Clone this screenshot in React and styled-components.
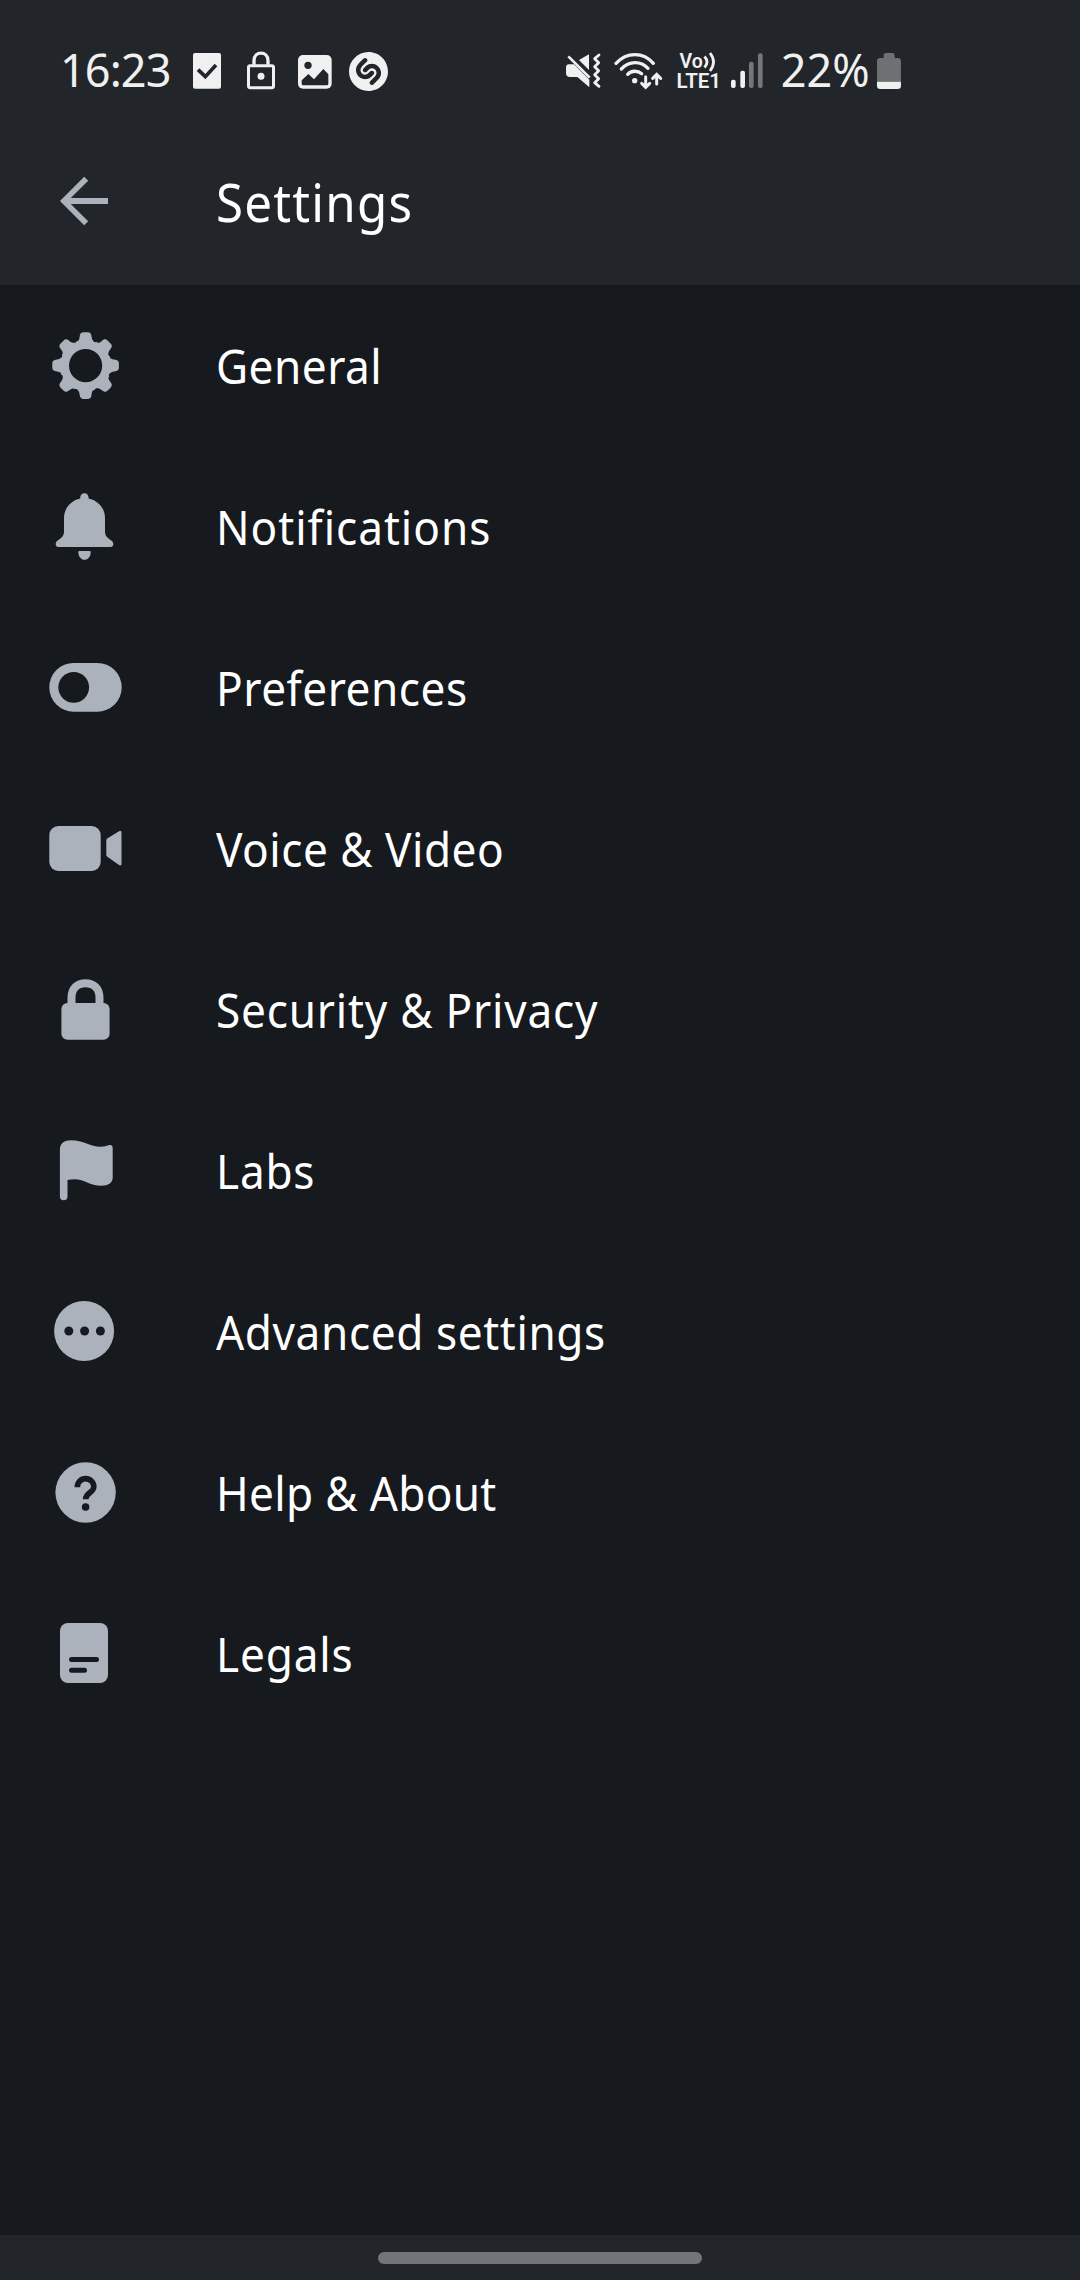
import React from "react";
import styled, { createGlobalStyle } from "styled-components";
import { SiShazam } from "react-icons/si";

const color = {
  page: "#16191e",
  bar: "#22262b",
  icon: "#abb2bc",
  status: "#f0f0f0",
  dim: "#74767a",
};

const GlobalStyle = createGlobalStyle`
  * { box-sizing: border-box; }
  body { margin: 0; background: ${color.page}; }
`;

const Screen = styled.div`
  display: flex;
  flex-direction: column;
  width: 1080px;
  height: 2280px;
  background: ${color.page};
  color: #fff;
  font-family: "Noto Sans", "Open Sans", sans-serif;
`;

const StatusBar = styled.div`
  display: flex;
  flex: none;
  height: 120px;
  padding: 30px 0 0 60px;
  background: ${color.bar};
  color: ${color.status};
`;

const StatusGroup = styled.div`
  display: flex;
  align-items: flex-start;
  width: ${(p) => p.$width || "auto"};
`;

const StatusText = styled.span`
  flex: none;
  width: ${(p) => p.$width}px;
  margin-left: ${(p) => p.$gap || 0}px;
  font-size: 45px;
  font-weight: 400;
  line-height: 80px;
  letter-spacing: ${(p) => p.$spacing || 0}px;
  white-space: nowrap;
`;

const StatusSvg = styled.svg`
  flex: none;
  height: 90px;
  width: ${(p) => p.$width}px;
  margin-left: ${(p) => p.$gap}px;
  overflow: visible;
`;

const Shazam = styled(SiShazam)`
  flex: none;
  width: 39px;
  height: 39px;
  margin: 22px 0 0 17.5px;
`;

const Volte = styled.div`
  flex: none;
  width: 43px;
  margin: 23px 0 0 13.5px;
  font-family: Roboto, sans-serif;
  font-weight: 600;
  white-space: nowrap;
`;

const VolteTop = styled.div`
  display: flex;
  height: 19px;
  padding-left: 3px;
  font-size: 19.5px;
  line-height: 17px;
`;

const VolteBottom = styled.div`
  font-size: 20.5px;
  line-height: 19px;
`;

const Waves = styled.svg`
  flex: none;
  width: 13px;
  height: 20px;
  margin-top: -1px;
`;

const Header = styled.header`
  display: flex;
  flex: none;
  height: 165px;
  padding-left: 40px;
  background: ${color.bar};
`;

const BackArrow = styled.svg`
  flex: none;
  width: 90px;
  height: 165px;
  fill: ${color.icon};
`;

const Title = styled.h1`
  margin: 0 0 0 86px;
  font-size: 53px;
  font-weight: 400;
  line-height: 163px;
  letter-spacing: ${(p) => p.$spacing}px;
  transform: scaleX(0.93);
  transform-origin: left;
`;

const List = styled.ul`
  flex: 1;
  margin: 0;
  padding: 0;
  list-style: none;
  background: linear-gradient(#14171b, ${color.page} 14px);
`;

const Row = styled.li`
  display: flex;
  height: 161px;
  padding-left: 40px;
`;

const RowIcon = styled.svg`
  flex: none;
  width: 90px;
  height: 161px;
  fill: ${color.icon};
`;

const Label = styled.span`
  margin-left: 86px;
  font-size: 47.5px;
  line-height: 162px;
  letter-spacing: ${(p) => p.$spacing}px;
  white-space: nowrap;
  transform: scaleX(0.93);
  transform-origin: left;
`;

const NavBar = styled.div`
  display: flex;
  flex: none;
  justify-content: center;
  height: 45px;
  padding-top: 17px;
  background: ${color.bar};
`;

const Handle = styled.div`
  width: 324px;
  height: 12px;
  border-radius: 6px;
  background: #737478;
`;

function gearPath() {
  const tooth = [
    [-6, -28.6], [-5.7, -32], [-4.6, -33.3], [-2, -33.3],
    [2, -33.3],
    [4.6, -33.3], [5.7, -32], [6, -28.6],
    [6.5, -24.4], [9.5, -22.4], [13, -23.4],
  ];
  let d = "";
  for (let k = 0; k < 8; k++) {
    const turn = (n) => (x, y) => {
      const a = (n * Math.PI) / 4;
      return `${(45.6 + x * Math.cos(a) - y * Math.sin(a)).toFixed(2)} ${(80.6 + x * Math.sin(a) + y * Math.cos(a)).toFixed(2)}`;
    };
    const p = tooth.map(([x, y]) => turn(k)(x, y));
    const next = turn(k + 1);
    d += `${k ? "L" : "M"}${p[0]}C${p[1]} ${p[2]} ${p[3]}L${p[4]}C${p[5]} ${p[6]} ${p[7]}`;
    d += `C${p[8]} ${p[9]} ${next(-9.2, -24.4)}C${next(-7.5, -24.2)} ${next(-6.3, -25.5)} ${next(-6, -28.6)}`;
  }
  return d + "ZM45.6 64a16.6 16.6 0 1 0 0 33.2a16.6 16.6 0 1 0 0-33.2Z";
}

const items = [
  { label: "General", spacing: 0.5, icon: <path fillRule="evenodd" d={gearPath()} /> },
  {
    label: "Notifications",
    spacing: 1.04,
    icon: (
      <>
        <path d="M40.2 52.4C40 49.4 41.8 47.2 44.4 47.2S48.800 49.4 48.600 52.4C58 54.5 65 62 65 72V85.5C65 90.5 68.5 92.6 71.3 94.4C72.8 95.4 73.3 96.8 73.3 98.2C73.3 99.8 72.2 101 70.7 101H18.3C16.8 101 15.7 99.8 15.7 98.2C15.7 96.8 16.2 95.4 17.7 94.4C20.5 92.6 24 90.5 24 85.5V72C24 62 31 54.5 40.2 52.4Z" />
        <path d="M38.3 106Q38.3 105 39.3 105H49.7Q50.7 105 50.7 106C50.7 110.5 48 113.8 44.5 113.8S38.3 110.5 38.3 106Z" />
      </>
    ),
  },
  {
    label: "Preferences",
    spacing: 0.56,
    icon: (
      <>
        <rect x="9.3" y="56" width="72.4" height="48.7" rx="24.3" />
        <circle cx="33.7" cy="80.3" r="15.4" fill={color.page} />
      </>
    ),
  },
  {
    label: "Voice & Video",
    spacing: 0.52,
    icon: (
      <>
        <rect x="9.3" y="58" width="51.4" height="45" rx="9" />
        <path d="M66.3 72.6Q66.3 71 67.6 70.2L79 63.2Q81.5 62 81.5 64.8V95.6Q81.5 98.4 79 97L67.4 88.8Q66.3 88 66.3 86.4Z" />
      </>
    ),
  },
  {
    label: "Security & Privacy",
    spacing: 0.83,
    icon: (
      <>
        <path d="M31.5 78V69C31.5 59 37.5 54.2 45.5 54.2S59.5 59 59.5 69V78" fill="none" stroke={color.icon} strokeWidth="8" />
        <rect x="21.4" y="74" width="48.2" height="36.7" rx="6" />
      </>
    ),
  },
  {
    label: "Labs",
    spacing: 0.8,
    icon: (
      <path d="M19.9 60C19.9 53 24.5 50.3 31 50.3C43 50.3 51 56.7 60 56.7C64.5 56.7 66.5 55.8 69.5 55Q72.7 54.4 72.7 58.5V87.5C72.7 93 68 95.7 61.5 95.7C49.5 95.7 44.5 89.3 34.5 89.3C31.8 89.3 29.5 89.5 27.5 90V106.5A3.8 3.8 0 0 1 19.9 106.5Z" />
    ),
  },
  {
    label: "Advanced settings",
    spacing: 0.64,
    icon: (
      <>
        <circle cx="44.1" cy="80" r="30" />
        <g fill={color.page}>
          <circle cx="28.8" cy="80" r="4.5" />
          <circle cx="44.6" cy="80" r="4.5" />
          <circle cx="60.4" cy="80" r="4.5" />
        </g>
      </>
    ),
  },
  {
    label: "Help & About",
    spacing: 0.33,
    icon: (
      <>
        <circle cx="45.6" cy="80.5" r="30.2" />
        <path d="M37.4 75.2V74.8A8.2 8.2 0 0 1 53.8 74.8C53.8 81 45.6 80.3 45.6 87.3" fill="none" stroke={color.page} strokeWidth="5.6" />
        <circle cx="45.6" cy="95" r="3.8" fill={color.page} />
      </>
    ),
  },
  {
    label: "Legals",
    spacing: 0.87,
    icon: (
      <>
        <rect x="20" y="50" width="48" height="60" rx="8" />
        <g fill={color.page}>
          <rect x="29" y="84" width="30" height="5" rx="2.5" />
          <rect x="29" y="94.7" width="18" height="5" rx="2.5" />
        </g>
      </>
    ),
  },
];

export default function App() {
  return (
    <Screen>
      <GlobalStyle />
      <StatusBar>
        <StatusGroup $width="505px">
          <StatusText $width={133} $spacing={-0.9}>16:23</StatusText>
          <StatusSvg $width={28} $gap={0} viewBox="459 0 84 270" fill={color.status}>
            <rect x="459" y="69" width="84" height="107" rx="6" />
            <path d="M474 119L496 140L528 105" fill="none" stroke={color.bar} strokeWidth="11" />
          </StatusSvg>
          <StatusSvg $width={28} $gap={26} viewBox="621 0 84 270" fill="none" stroke={color.status} strokeWidth="9">
            <rect x="625.500" y="107" width="75" height="66" rx="5" />
            <path d="M642 104V92C642 62 684 62 684 92V104" strokeWidth="10" />
            <circle cx="663" cy="139" r="10.500" fill={color.status} stroke="none" />
          </StatusSvg>
          <StatusSvg $width={33.7} $gap={23.3} viewBox="775 0 101 270" fill={color.status}>
            <rect x="775" y="75" width="101" height="101" rx="15" />
            <g fill={color.bar}>
              <circle cx="805" cy="106" r="11" />
              <path d="M786 151L806 132L823 148L851 117L866 133V161Q866 166 861 166H791Q786 166 786 161Z" />
            </g>
          </StatusSvg>
          <Shazam />
        </StatusGroup>
        <StatusGroup>
          <StatusSvg $width={36} $gap={0} viewBox="45 0 108 270" fill={color.status}>
            <path d="M117 73V120L87 90ZM56 103H72L118 149V172L82 141H60Q48 141 48 129V114Q48 103 56 103Z" />
            <path d="M55 79L119 143" fill="none" stroke={color.status} strokeWidth="8" />
            <path d="M147 75L134 86L146 98L134 110L146 122L134 134L146 146L134 158L147 169" fill="none" stroke={color.status} strokeWidth="8.500" strokeLinejoin="round" strokeLinecap="round" />
          </StatusSvg>
          <StatusSvg $width={48.7} $gap={13.3} viewBox="193 0 146 270" fill="none" stroke={color.status} strokeWidth="10" strokeLinecap="round">
            <path d="M199 100C231 65 281 65 311 100" />
            <path d="M215 117C239 92 273 92 295 115" />
            <path d="M234 133C245 121 264 121 276 131" />
            <circle cx="255" cy="152" r="8" fill={color.status} stroke="none" />
            <path d="M288 140V170M276 160L288 172L300 160M321 162V134M309 145L321 133L333 145" strokeWidth="9" />
          </StatusSvg>
          <Volte>
            <VolteTop>
              Vo
              <Waves viewBox="0 0 13 20" fill="none" stroke={color.status} strokeWidth="2.8">
                <path d="M1.500 4.500Q6.500 10 1.500 15.500M7 1Q14 10 7 19" />
              </Waves>
            </VolteTop>
            <VolteBottom>LTE1</VolteBottom>
          </Volte>
          <StatusSvg $width={32.3} $gap={11.5} viewBox="543 0 97 270" fill={color.status}>
            <rect x="543" y="149" width="14" height="25" rx="6" />
            <rect x="571" y="122" width="14" height="52" rx="6" />
            <rect x="597" y="95" width="14" height="79" rx="6" fill={color.dim} />
            <rect x="624" y="70" width="14" height="104" rx="6" fill={color.dim} />
          </StatusSvg>
          <StatusText $width={96} $gap={17.5}>22%</StatusText>
          <StatusSvg $width={24.3} $gap={0} viewBox="981 0 73 270">
            <path d="M981 155V94Q981 84 991 84H1001V76Q1001 69 1008 69H1027Q1034 69 1034 76V84H1043Q1053 84 1053 94V155Z" fill="#6e7174" />
            <path d="M981 155H1053V167Q1053 177 1043 177H991Q981 177 981 167Z" fill={color.status} />
          </StatusSvg>
        </StatusGroup>
      </StatusBar>
      <Header>
        <BackArrow viewBox="0 0 90 165">
          <path d="M20 81L44.200 56.800L48.200 60.800L30.800 78H68V84H30.800L48.200 101.200L44.200 105.200Z" />
        </BackArrow>
        <Title $spacing={1.3}>Settings</Title>
      </Header>
      <List>
        {items.map((item) => (
          <Row key={item.label}>
            <RowIcon viewBox="0 0 90 161">{item.icon}</RowIcon>
            <Label $spacing={item.spacing}>{item.label}</Label>
          </Row>
        ))}
      </List>
      <NavBar>
        <Handle />
      </NavBar>
    </Screen>
  );
}
